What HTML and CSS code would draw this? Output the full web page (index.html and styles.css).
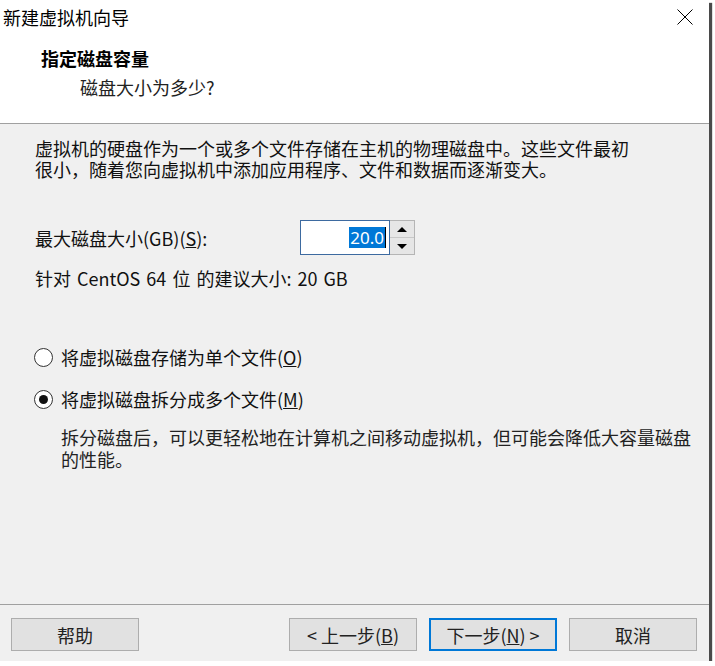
FILE: index.html
```html
<!DOCTYPE html>
<html lang="zh-CN">
<head>
<meta charset="utf-8">
<title>新建虚拟机向导</title>
<link rel="stylesheet" href="styles.css">
</head>
<body>
<div class="window">
  <div class="header">
    <div class="titlebar">
      <span class="title">新建虚拟机向导</span>
      <span class="close">
        <svg width="16" height="16" viewBox="0 0 16 16"><path d="M0.5 0.5 L15.5 15.5 M15.5 0.5 L0.5 15.5" stroke="#000" stroke-width="1" fill="none"/></svg>
      </span>
    </div>
    <div class="heading">指定磁盘容量</div>
    <div class="subheading">磁盘大小为多少?</div>
  </div>
  <div class="content">
    <div class="intro">
      <div class="line">虚拟机的硬盘作为一个或多个文件存储在主机的物理磁盘中。这些文件最初</div>
      <div class="line">很小，随着您向虚拟机中添加应用程序、文件和数据而逐渐变大。</div>
    </div>
    <div class="size-row">
      <span class="label">最大磁盘大小(GB)(<u>S</u>):</span>
      <div class="spinner">
        <div class="spin-input"><span class="sel">20.0</span><span class="caret"></span></div>
        <div class="spin-buttons">
          <div class="spin-btn"><span class="arrow-up"></span></div>
          <div class="spin-btn"><span class="arrow-down"></span></div>
        </div>
      </div>
    </div>
    <div class="recommend">针对 CentOS 64 位 的建议大小: 20 GB</div>
    <div class="radio-row first">
      <span class="radio"></span>
      <span>将虚拟磁盘存储为单个文件(<u>O</u>)</span>
    </div>
    <div class="radio-row">
      <span class="radio checked"></span>
      <span>将虚拟磁盘拆分成多个文件(<u>M</u>)</span>
    </div>
    <div class="desc">
      <div class="line">拆分磁盘后，可以更轻松地在计算机之间移动虚拟机，但可能会降低大容量磁盘</div>
      <div class="line">的性能。</div>
    </div>
  </div>
  <div class="footer">
    <button class="btn">帮助</button>
    <div class="spacer"></div>
    <button class="btn">&lt; 上一步(<u>B</u>)</button>
    <button class="btn default">下一步(<u>N</u>) &gt;</button>
    <button class="btn">取消</button>
  </div>
</div>
</body>
</html>
```

FILE: styles.css
```css
html, body {
  margin: 0;
  padding: 0;
  background: #ffffff;
}
body {
  font-family: "Noto Sans CJK SC", "Noto Sans", sans-serif;
  font-size: 18px;
  color: #111;
}
.window {
  width: 709px;
  height: 661px;
  background: #f0f0f0;
  box-shadow: 3px 3px 1px #4a4a4a;
  display: flex;
  flex-direction: column;
}
.header {
  background: #ffffff;
  height: 123px;
  border-bottom: 1px solid #a0a0a0;
  box-sizing: content-box;
}
.titlebar {
  height: 34px;
  display: flex;
  justify-content: space-between;
  align-items: center;
  padding-left: 3px;
}
.title {
  line-height: 34px;
  color: #000;
}
.close {
  width: 46px;
  height: 34px;
  margin-right: 1px;
  display: flex;
  align-items: center;
  justify-content: center;
}
.heading {
  margin-top: 13px;
  padding-left: 41px;
  line-height: 22px;
  font-weight: 700;
  color: #000;
}
.subheading {
  margin-top: 7px;
  padding-left: 80px;
  line-height: 22px;
  color: #222;
}
.content {
  flex: 1;
  padding: 0 0 0 35px;
}
.line {
  height: 21px;
  line-height: 21px;
  white-space: nowrap;
}
.intro {
  margin-top: 14px;
}
.size-row {
  margin-top: 40px;
  display: grid;
  grid-template-columns: 265px auto;
  align-items: center;
  height: 35px;
}
.spinner {
  display: flex;
  height: 35px;
}
.spin-input {
  width: 85px;
  height: 33px;
  background: #fff;
  border: 1px solid #3d6aa0;
  display: flex;
  align-items: center;
  justify-content: flex-end;
  padding-right: 3px;
  box-sizing: content-box;
  font-family: "Noto Sans", sans-serif;
  font-size: 17px;
}
.sel {
  background: #0078d7;
  color: #fff;
  line-height: 21px;
  padding: 0 1px;
}
.caret {
  width: 1px;
  height: 21px;
  background: #000;
}
.spin-buttons {
  width: 24px;
  display: flex;
  flex-direction: column;
  border: 1px solid #b5b5b5;
  border-left: none;
}
.spin-btn {
  flex: 1;
  background: #e6e6e6;
  display: flex;
  align-items: center;
  justify-content: center;
}
.spin-btn + .spin-btn {
  border-top: 1px solid #c8c8c8;
}
.arrow-up {
  width: 0;
  height: 0;
  border-left: 5px solid transparent;
  border-right: 5px solid transparent;
  border-bottom: 5px solid #000;
}
.arrow-down {
  width: 0;
  height: 0;
  border-left: 5px solid transparent;
  border-right: 5px solid transparent;
  border-top: 5px solid #000;
}
.recommend {
  margin-top: 12px;
  line-height: 22px;
  word-spacing: 2px;
}
.radio-row {
  display: flex;
  align-items: center;
  line-height: 22px;
  margin-top: 20px;
}
.radio-row.first {
  margin-top: 57px;
}
.radio {
  width: 17px;
  height: 17px;
  border: 1px solid #333;
  border-radius: 50%;
  background: #fff;
  margin-left: -1px;
  margin-right: 8px;
  display: flex;
  align-items: center;
  justify-content: center;
  flex: none;
}
.radio.checked::after {
  content: "";
  width: 9px;
  height: 9px;
  border-radius: 50%;
  background: #111;
}
.desc {
  margin-top: 16px;
  padding-left: 26px;
  color: #222;
}
.desc .line {
  height: 22px;
  line-height: 22px;
}
.footer {
  border-top: 1px solid #a0a0a0;
  height: 57px;
  box-sizing: border-box;
  display: flex;
  align-items: flex-start;
  padding: 13px 12px 0 11px;
  gap: 12px;
}
.spacer {
  flex: 1;
}
.btn {
  width: 128px;
  height: 33px;
  background: #e1e1e1;
  border: 1px solid #adadad;
  font-family: "Noto Sans CJK SC", "Noto Sans", sans-serif;
  font-size: 18px;
  color: #222;
  padding: 0;
  line-height: 30px;
  box-sizing: border-box;
}
.btn.default {
  border: 2px solid #0078d7;
}
```
